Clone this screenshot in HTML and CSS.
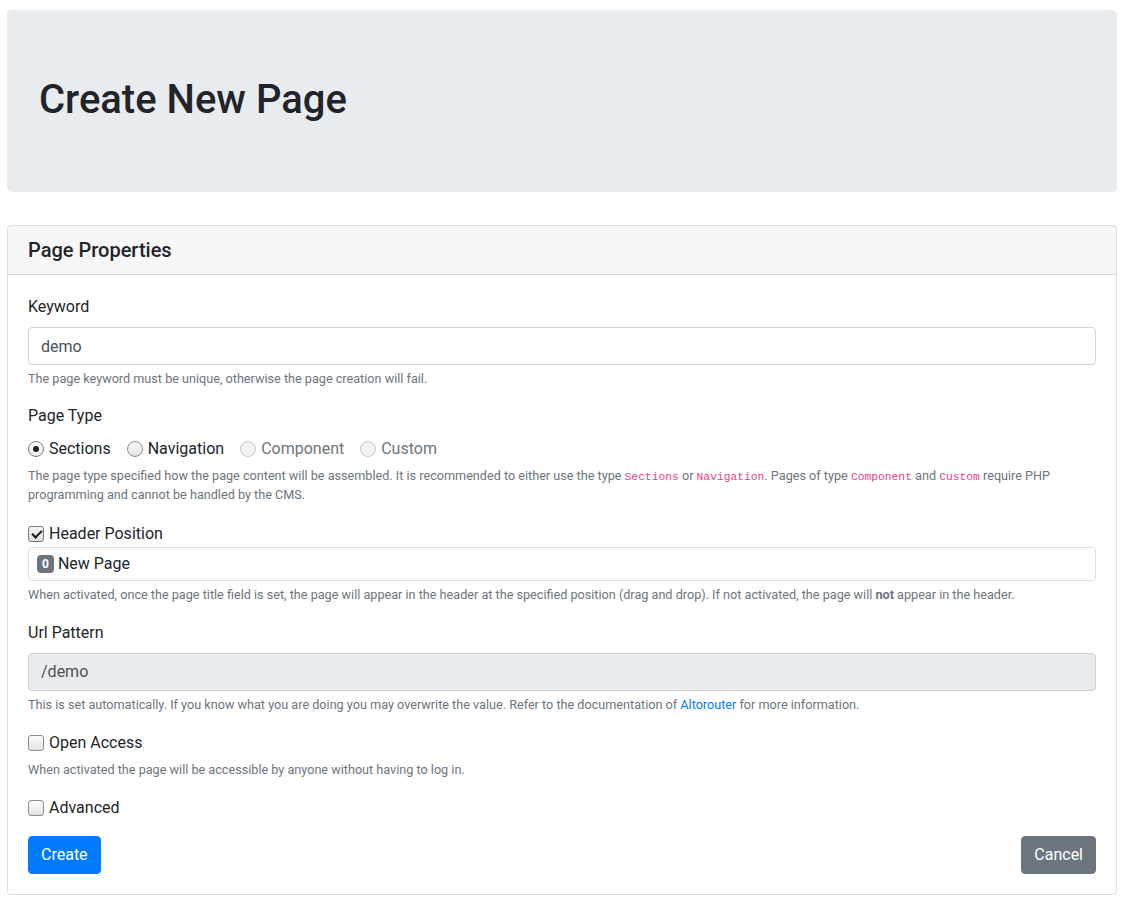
FILE: index.html
```html
<!DOCTYPE html>
<html lang="en">
<head>
<meta charset="utf-8">
<title>Create New Page</title>
<link rel="stylesheet" href="styles.css">
</head>
<body>
<div class="container">
  <div class="jumbotron">
    <h1 class="title">Create New Page</h1>
  </div>
  <div class="card">
    <div class="card-header">
      <h5 class="card-title">Page Properties</h5>
    </div>
    <form class="card-body">
      <div class="form-group">
        <label class="label" for="keyword">Keyword</label>
        <input class="form-control" id="keyword" type="text" value="demo">
        <small class="help">The page keyword must be unique, otherwise the page creation will fail.</small>
      </div>
      <div class="form-group">
        <div class="label">Page Type</div>
        <div class="radio-row">
          <label class="check-inline"><input class="radio" type="radio" name="type" checked><span>Sections</span></label>
          <label class="check-inline"><input class="radio" type="radio" name="type"><span>Navigation</span></label>
          <label class="check-inline disabled"><input class="radio" type="radio" name="type" disabled><span>Component</span></label>
          <label class="check-inline disabled"><input class="radio" type="radio" name="type" disabled><span>Custom</span></label>
        </div>
        <small class="help help-type">The page type specified how the page content will be assembled. It is recommended to either use the type <code>Sections</code> or <code>Navigation</code>. Pages of type <code>Component</code> and <code>Custom</code> require PHP programming and cannot be handled by the CMS.</small>
      </div>
      <div class="form-group">
        <label class="check-row check-row-tall"><input class="checkbox" type="checkbox" checked><span>Header Position</span></label>
        <div class="sortable">
          <div class="sortable-item"><span class="badge">0</span> New Page</div>
        </div>
        <small class="help">When activated, once the page title field is set, the page will appear in the header at the specified position (drag and drop). If not activated, the page will <b>not</b> appear in the header.</small>
      </div>
      <div class="form-group">
        <label class="label" for="url">Url Pattern</label>
        <input class="form-control" id="url" type="text" value="/demo" readonly>
        <small class="help">This is set automatically. If you know what you are doing you may overwrite the value. Refer to the documentation of <a href="#">Altorouter</a> for more information.</small>
      </div>
      <div class="form-group">
        <label class="check-row"><input class="checkbox" type="checkbox"><span>Open Access</span></label>
        <small class="help">When activated the page will be accessible by anyone without having to log in.</small>
      </div>
      <div class="form-group form-group-last">
        <label class="check-row"><input class="checkbox" type="checkbox"><span>Advanced</span></label>
      </div>
      <div class="actions">
        <button type="button" class="btn btn-primary">Create</button>
        <button type="button" class="btn btn-secondary">Cancel</button>
      </div>
    </form>
  </div>
</div>
</body>
</html>
```

FILE: styles.css
```css
* { box-sizing: border-box; }
body {
  margin: 0;
  font-family: Roboto, "Liberation Sans", sans-serif;
  font-size: 16px;
  line-height: 1.5;
  color: #212529;
  background: #fff;
}
.container {
  padding: 10px 8px 0 7px;
}
.jumbotron {
  background: #e9ecef;
  border-radius: 4.8px;
  padding: 66px 32px 62px;
  margin-bottom: 33px;
}
.title {
  margin: 0 0 6px;
  font-size: 40px;
  font-weight: 500;
  line-height: 1.2;
}
.card {
  border: 1px solid rgba(0,0,0,.125);
  border-radius: 4px;
  background: #fff;
}
.card-header {
  background: rgba(0,0,0,.03);
  border-bottom: 1px solid rgba(0,0,0,.125);
  padding: 12px 20px;
}
.card-title {
  margin: 0;
  font-size: 20px;
  font-weight: 500;
  line-height: 1.2;
}
.card-body {
  padding: 20px;
}
.form-group {
  margin-bottom: 16px;
}
.form-group-last {
  margin-bottom: 15px;
}
.label {
  display: block;
  margin-bottom: 8px;
}
.form-control {
  display: block;
  width: 100%;
  height: 38px;
  padding: 6px 12px;
  font: inherit;
  color: #495057;
  background: #fff;
  border: 1px solid #ced4da;
  border-radius: 4px;
}
.form-control[readonly] {
  background: #e9ecef;
}
.help {
  display: block;
  margin-top: 4px;
  font-size: 12.65px;
  line-height: 19.2px;
  color: #6c757d;
}
.help-type {
  margin-top: 6px;
  line-height: 18.6px;
}
.help code {
  font-family: "Liberation Mono", "DejaVu Sans Mono", monospace;
  font-size: 11.3px;
  line-height: 1;
  color: #e83e8c;
}
.help b { font-weight: 700; }
.help a {
  color: #007bff;
  text-decoration: none;
}
.radio-row {
  display: flex;
  align-items: center;
  height: 25px;
}
.check-inline {
  display: inline-flex;
  align-items: center;
  margin-right: 16px;
}
.check-inline.disabled {
  color: #6c757d;
}
.check-row {
  display: flex;
  align-items: center;
  height: 26px;
}
.check-row-tall {
  height: 27px;
}
.radio,
.checkbox {
  appearance: none;
  -webkit-appearance: none;
  position: relative;
  flex: none;
  width: 16px;
  height: 16px;
  margin: 0 5px 0 0;
  border: 1px solid #8e8e8e;
  background: linear-gradient(#fcfcfc, #e3e3e3);
}
.radio {
  border-radius: 50%;
}
.radio:checked {
  background: linear-gradient(#ffffff, #ececec);
  border-color: #7a7a7a;
}
.radio:checked::after {
  content: "";
  position: absolute;
  left: 4px;
  top: 4px;
  width: 6px;
  height: 6px;
  border-radius: 50%;
  background: #222;
}
.radio:disabled {
  border-color: #c9c9c9;
  background: #f3f3f3;
}
.checkbox {
  border-radius: 3px;
}
.checkbox:checked {
  background: linear-gradient(#f4f4f4, #dcdcdc);
  border-color: #7a7a7a;
}
.checkbox:checked::after {
  content: "";
  position: absolute;
  left: 4.5px;
  top: 1px;
  width: 4px;
  height: 8px;
  border-right: 2.5px solid #1a1a1a;
  border-bottom: 2.5px solid #1a1a1a;
  transform: rotate(45deg);
}
.sortable {
  border: 1px solid #dee2e6;
  border-radius: 4px;
}
.sortable-item {
  padding: 4px 8px;
  display: flex;
  align-items: center;
  gap: 4px;
}
.badge {
  display: inline-block;
  background: #6c757d;
  color: #fff;
  font-size: 12px;
  font-weight: 700;
  line-height: 1;
  padding: 3px 5px;
  border-radius: 4px;
}
.actions {
  display: flex;
  justify-content: space-between;
}
.btn {
  font: inherit;
  line-height: 1.5;
  padding: 6px 12px;
  border: 1px solid transparent;
  border-radius: 4px;
  color: #fff;
  cursor: pointer;
}
.btn-primary {
  background: #007bff;
  border-color: #007bff;
}
.btn-secondary {
  background: #6c757d;
  border-color: #6c757d;
}
```
